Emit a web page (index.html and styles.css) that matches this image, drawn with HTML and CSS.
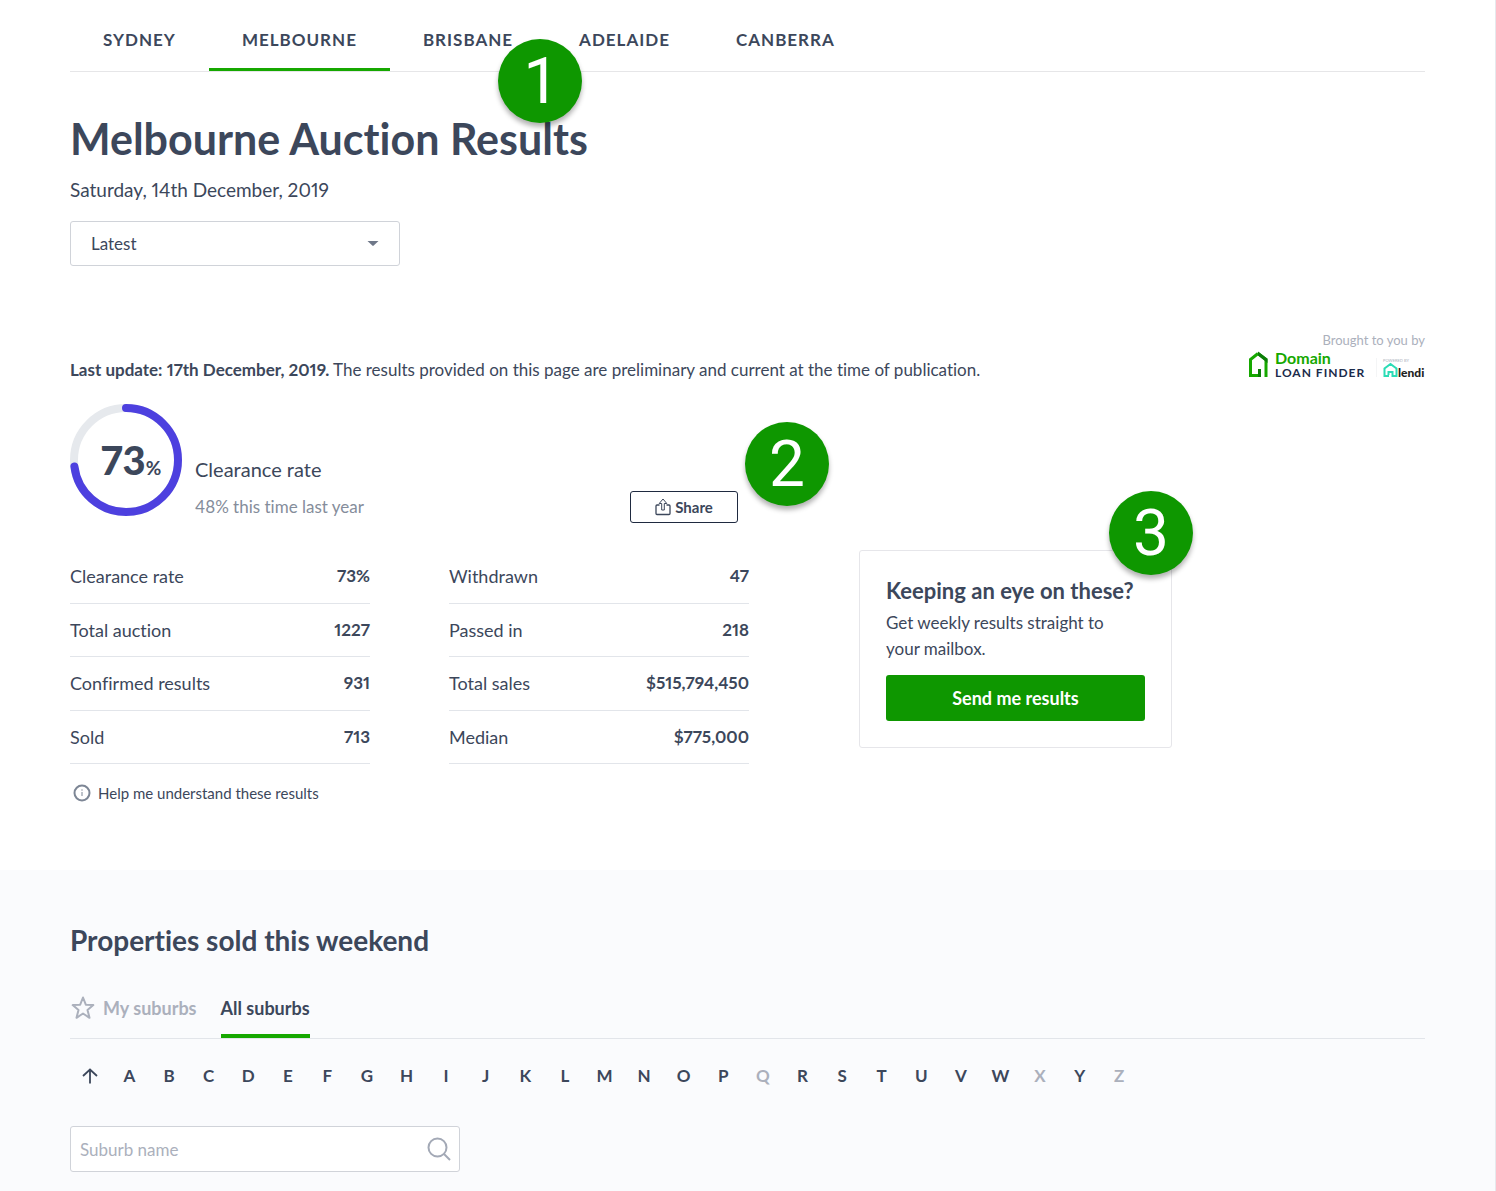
FILE: index.html
```html
<!DOCTYPE html>
<html lang="en">
<head>
    <meta charset="UTF-8">
    <meta name="viewport" content="width=device-width, initial-scale=1.0">
    <title>Melbourne Auction Results</title>
    <link rel="stylesheet" href="styles.css">
</head>
<body>
    <div class="page">
        <div class="results">
            <nav class="city-tabs">
                <a href="#">SYDNEY</a>
                <a href="#" class="active">MELBOURNE</a>
                <a href="#">BRISBANE</a>
                <a href="#">ADELAIDE</a>
                <a href="#">CANBERRA</a>
                <span class="marker marker-tabs">1</span>
            </nav>

            <h1>Melbourne Auction Results</h1>
            <p class="date">Saturday, 14th December, 2019</p>
            <div class="week-select">
                <select aria-label="Auction week">
                    <option>Latest</option>
                </select>
                <svg width="12" height="6" viewBox="0 0 12 6"><path d="M0.500 0H11.500L6.700 4.600Q6 5.200 5.300 4.600Z" fill="#6f7889"/></svg>
            </div>

            <div class="update-row">
                <p class="update"><strong>Last update: 17th December, 2019.</strong> The results provided on this page are preliminary and current at the time of publication.</p>
                <div class="sponsor">
                    <p>Brought to you by</p>
                    <svg width="178" height="30" viewBox="0 0 178 30">
                        <path d="M11 3.500L3.500 9.500V25.500H12.500V19" fill="none" stroke="#16a800" stroke-width="3"/>
                        <path d="M11 3.500L19 9.500V27" fill="none" stroke="#16a800" stroke-width="3"/>
                        <path d="M11 1.500L20.500 8.700V13L11 5.500Z" fill="#0b7d08"/>
                        <path d="M14 27H11V19H14Z" fill="#0b7d08"/>
                        <text x="28" y="14" class="logo-domain">Domain</text>
                        <text x="28" y="27" class="logo-finder">LOAN FINDER</text>
                        <path d="M129.500 8V27" stroke="#f4f5f6"/>
                        <text x="136" y="12" class="logo-powered">POWERED BY</text>
                        <path d="M142 26H137.500V18.500L143.500 14L149.500 18.500V26H145.500V22H141.500V25" fill="none" stroke="#2bdcb5" stroke-width="2"/>
                        <text x="151" y="27" class="logo-lendi">lendi</text>
                    </svg>
                </div>
            </div>

            <div class="columns">
                <div class="stats">
                    <div class="summary">
                        <div class="ring">
                            <svg width="112" height="112" viewBox="0 0 112 112">
                                <circle cx="56" cy="56" r="52" fill="none" stroke="#e6e9ed" stroke-width="8"/>
                                <circle cx="56" cy="56" r="52" fill="none" stroke="#4d40df" stroke-width="8" stroke-linecap="round" pathLength="100" stroke-dasharray="73 100" transform="rotate(-90 56 56)"/>
                            </svg>
                            <p class="ring-value">73<small>%</small></p>
                        </div>
                        <div class="summary-text">
                            <p class="summary-title">Clearance rate</p>
                            <p class="summary-sub">48% this time last year</p>
                        </div>
                        <div class="share-wrap">
                            <button class="share-btn">
                                <svg width="16" height="18" viewBox="0 0 16 18" fill="none" stroke="#3c475b" stroke-width="1.300" stroke-linejoin="round"><path d="M4.500 7H2Q1 7 1 8V15.500Q1 16.500 2 16.500H14Q15 16.500 15 15.500V8Q15 7 14 7H11.500"/><path d="M6.700 12V5.500H4.200L8 1L11.800 5.500H9.300V12Z" stroke-width="1"/></svg>
                                Share
                            </button>
                            <span class="marker marker-share">2</span>
                        </div>
                    </div>

                    <div class="tables">
                        <table>
                            <tr><th scope="row">Clearance rate</th><td>73%</td></tr>
                            <tr><th scope="row">Total auction</th><td>1227</td></tr>
                            <tr><th scope="row">Confirmed results</th><td>931</td></tr>
                            <tr><th scope="row">Sold</th><td>713</td></tr>
                        </table>
                        <table>
                            <tr><th scope="row">Withdrawn</th><td>47</td></tr>
                            <tr><th scope="row">Passed in</th><td>218</td></tr>
                            <tr><th scope="row">Total sales</th><td>$515,794,450</td></tr>
                            <tr><th scope="row">Median</th><td>$775,000</td></tr>
                        </table>
                    </div>

                    <a href="#" class="help">
                        <svg width="18" height="18" viewBox="0 0 18 18"><circle cx="9" cy="9" r="7.500" fill="none" stroke="#7d8695" stroke-width="2"/><path d="M9 8V12" stroke="#7d8695"/><circle cx="9" cy="6" r="0.700" fill="#7d8695"/></svg>
                        Help me understand these results
                    </a>
                </div>

                <div class="subscribe">
                    <h3>Keeping an eye on these?</h3>
                    <p>Get weekly results straight to your mailbox.</p>
                    <button class="send-btn">Send me results</button>
                    <span class="marker marker-subscribe">3</span>
                </div>
            </div>
        </div>

        <div class="properties">
            <h2>Properties sold this weekend</h2>
            <nav class="suburb-tabs">
                <a href="#" class="mine">
                    <svg width="24" height="24" viewBox="0 0 24 24"><path d="M12 1.500L14.800 8.700L22.300 9.100L16.500 14L18.500 21.800L12 17.500L5.500 21.800L7.500 14L1.700 9.100L9.200 8.700Z" fill="none" stroke="#abb0bc" stroke-width="2" stroke-linejoin="round"/></svg>
                    My suburbs
                </a>
                <a href="#" class="active">All suburbs</a>
            </nav>
            <div class="letters">
                <a href="#" aria-label="Back to top"><svg width="16" height="16" viewBox="0 0 16 16"><path d="M8 15.500V1.500M1 8L8 1.500L15 8" fill="none" stroke="#3c475b" stroke-width="1.800"/></svg></a>
                <a href="#">A</a>
                <a href="#">B</a>
                <a href="#">C</a>
                <a href="#">D</a>
                <a href="#">E</a>
                <a href="#">F</a>
                <a href="#">G</a>
                <a href="#">H</a>
                <a href="#">I</a>
                <a href="#">J</a>
                <a href="#">K</a>
                <a href="#">L</a>
                <a href="#">M</a>
                <a href="#">N</a>
                <a href="#">O</a>
                <a href="#">P</a>
                <a class="disabled">Q</a>
                <a href="#">R</a>
                <a href="#">S</a>
                <a href="#">T</a>
                <a href="#">U</a>
                <a href="#">V</a>
                <a href="#">W</a>
                <a class="disabled">X</a>
                <a href="#">Y</a>
                <a class="disabled">Z</a>
            </div>
            <div class="search">
                <input type="text" placeholder="Suburb name" aria-label="Suburb name">
                <svg width="24" height="24" viewBox="0 0 24 24" fill="none" stroke="#a3a9b6" stroke-width="2"><circle cx="10.500" cy="10.500" r="9"/><path d="M17 17L23 23"/></svg>
            </div>
        </div>
    </div>
</body>
</html>
```

FILE: styles.css
```css
* {
    box-sizing: border-box;
}
body {
    margin: 0;
    font-family: Lato, "Liberation Sans", sans-serif;
    font-size: 17px;
    font-variant-ligatures: none;
    font-variant-numeric: proportional-nums;
    line-height: 26px;
    color: #3c475b;
    background: #fff;
}
h1, h2, h3, p {
    margin: 0;
}
a {
    color: inherit;
    text-decoration: none;
}
svg {
    display: block;
    flex-shrink: 0;
}
button, input, select {
    font-family: inherit;
    color: inherit;
}
.page {
    border-right: 1px solid #e6e9ed;
}
.results {
    padding: 0 70px 64px;
}

/* city tabs */
.city-tabs {
    position: relative;
    display: flex;
    border-bottom: 1px solid #e6e6e8;
}
.city-tabs a {
    padding: 27px 33px 15px;
    border-bottom: 3px solid transparent;
    font-weight: 700;
    letter-spacing: 1px;
}
.city-tabs .active {
    border-color: #16a800;
}

/* numbered markers */
.marker {
    position: absolute;
    width: 84px;
    height: 84px;
    border-radius: 50%;
    background: #0e9700;
    color: #fff;
    font-family: Roboto, sans-serif;
    font-size: 64px;
    font-weight: 400;
    line-height: 86px;
    text-align: center;
    box-shadow: 0 4px 5px rgba(0, 0, 0, 0.3);
}
.marker-tabs {
    left: 428px;
    top: 39px;
}
.marker-share {
    left: 115px;
    bottom: 17px;
}
.marker-subscribe {
    right: -22px;
    top: -60px;
}

h1 {
    margin-top: 43px;
    font-size: 43px;
    line-height: 48px;
}
.date {
    margin-top: 14px;
    font-size: 19px;
}
.week-select {
    position: relative;
    max-width: 330px;
    margin-top: 18px;
}
.week-select select {
    display: block;
    width: 100%;
    height: 45px;
    padding: 0 20px;
    border: 1px solid #d0d3d9;
    border-radius: 3px;
    background: #fff;
    font-size: 17px;
    appearance: none;
}
.week-select svg {
    position: absolute;
    right: 21px;
    top: 20px;
    pointer-events: none;
}

.update-row {
    display: flex;
    justify-content: space-between;
    align-items: flex-end;
    margin-top: 64px;
}
.update {
    line-height: 20px;
}
.sponsor p {
    font-size: 13px;
    line-height: 20px;
    color: #abb0bc;
    text-align: right;
}
.sponsor svg {
    overflow: visible;
}
.logo-domain {
    font-size: 16px;
    font-weight: 700;
    fill: #16a800;
}
.logo-finder {
    font-size: 12px;
    font-weight: 700;
    letter-spacing: 1px;
    fill: #1b2b4b;
}
.logo-powered {
    font-size: 4px;
    fill: #abb0bc;
}
.logo-lendi {
    font-size: 12px;
    font-weight: 900;
    fill: #222;
}

.columns {
    display: flex;
    align-items: flex-start;
    gap: 110px;
    margin-top: 24px;
}
.stats {
    flex: 0 1 679px;
}
.summary {
    display: flex;
    min-height: 119px;
    padding-right: 11px;
}
.ring {
    position: relative;
}
.ring-value {
    position: absolute;
    left: 31px;
    top: 32px;
    font-size: 40px;
    font-weight: 900;
    line-height: 48px;
    white-space: nowrap;
}
.ring-value small {
    font-size: 19px;
    font-weight: 700;
}
.summary-text {
    padding: 52px 0 0 13px;
}
.summary-title {
    font-size: 20px;
}
.summary-sub {
    margin-top: 12px;
    color: #858d9b;
}
.share-wrap {
    position: relative;
    align-self: flex-end;
    margin-left: auto;
}
.share-btn {
    display: flex;
    align-items: center;
    justify-content: center;
    gap: 4px;
    width: 108px;
    height: 32px;
    padding: 0;
    border: 1px solid #1f2a40;
    border-radius: 3px;
    background: #fff;
    font-size: 15px;
    font-weight: 700;
    cursor: pointer;
}

.tables {
    display: flex;
    gap: 79px;
    margin-top: 27px;
}
table {
    flex: 1;
    height: 214px;
    border-collapse: separate;
    border-spacing: 0;
}
th, td {
    padding: 0;
    border-bottom: 1px solid #e2e5ea;
}
th {
    font-size: 18px;
    font-weight: 400;
    text-align: left;
}
td {
    font-weight: 700;
    text-align: right;
}
.help {
    display: flex;
    align-items: center;
    gap: 7px;
    margin-top: 16px;
    padding-left: 3px;
    font-size: 15px;
}

.subscribe {
    position: relative;
    flex: 0 1 313px;
    margin-top: 146px;
    padding: 26px;
    border: 1px solid #e6e6ea;
    border-radius: 3px;
}
.subscribe h3 {
    font-size: 22px;
    line-height: 28px;
}
.subscribe p {
    margin-top: 5px;
    padding-right: 26px;
}
.send-btn {
    display: block;
    width: 100%;
    height: 46px;
    margin-top: 13px;
    border: none;
    border-radius: 3px;
    background: #0e9700;
    color: #fff;
    font-size: 18px;
    font-weight: 700;
    cursor: pointer;
}

/* properties */
.properties {
    padding: 54px 70px 19px;
    background: #fafbfd;
}
h2 {
    font-size: 28px;
    line-height: 32px;
}
.suburb-tabs {
    display: flex;
    gap: 24px;
    margin-top: 39px;
    border-bottom: 1px solid #e2e5ea;
    font-size: 18px;
    font-weight: 700;
}
.suburb-tabs a {
    display: flex;
    align-items: center;
    gap: 8px;
    padding-bottom: 13px;
    border-bottom: 4px solid transparent;
}
.suburb-tabs .mine {
    padding-left: 1px;
    color: #abb0bc;
}
.suburb-tabs .active {
    border-color: #16a800;
}
.letters {
    display: flex;
    max-width: 1069px;
    margin-top: 24px;
    font-weight: 700;
}
.letters a {
    display: flex;
    flex: 1;
    align-items: center;
    justify-content: center;
}
.letters .disabled {
    color: #abb0bc;
}
.search {
    position: relative;
    max-width: 390px;
    margin-top: 37px;
}
.search input {
    display: block;
    width: 100%;
    height: 46px;
    padding: 0 48px 0 9px;
    border: 1px solid #d0d3d9;
    border-radius: 3px;
    background: #fff;
    font-size: 17px;
}
.search input::placeholder {
    color: #abb0bc;
}
.search svg {
    position: absolute;
    right: 9px;
    top: 11px;
}
```
